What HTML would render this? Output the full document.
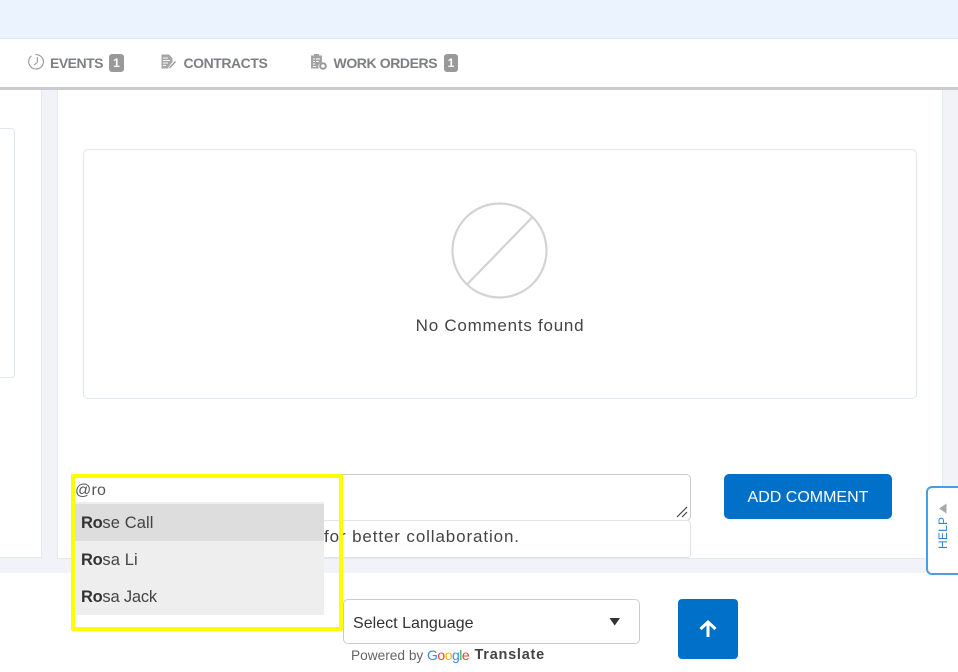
<!DOCTYPE html>
<html><head><meta charset="utf-8">
<style>
*{box-sizing:border-box}
html,body{margin:0;padding:0;width:958px;height:672px;overflow:hidden;background:#fff;font-family:"Liberation Sans",sans-serif}
.a{position:absolute}
.t{position:absolute;white-space:nowrap;line-height:1}
</style></head><body>
<div class="a" style="left:0;top:0;width:958px;height:39px;background:#ebf3fe;border-bottom:1px solid #dfe6ef"></div>
<div class="a" style="left:0;top:39px;width:958px;height:48px;background:#fff"></div>
<div class="a" style="left:0;top:87px;width:958px;height:3px;background:#ccc"></div>

<svg class="a" style="left:26px;top:53px" width="20" height="18" viewBox="0 0 20 18" fill="none" stroke="#999" stroke-width="1.1"><path d="M5.500 2.800A7.400 7.400 0 1 0 17 6"/><path d="M9.500 1.600A7.400 7.400 0 0 1 17.300 7.500"/><path d="M11.300 4v5.400L8 12"/></svg>
<div class="t" style="left:50px;top:55.500px;font-size:14px;font-weight:bold;color:#7d7f84;letter-spacing:-.5px">EVENTS</div>
<div class="a" style="left:109px;top:54px;width:15px;height:18px;background:#999;border-radius:3px;color:#fff;font-size:12px;font-weight:bold;text-align:center;line-height:18px">1</div>

<svg class="a" style="left:160px;top:53px" width="18" height="18" viewBox="0 0 18 18"><path d="M1.500 1.500h7.500l3.500 3.500v4l-4 5v1.500h-7z" fill="#a6a6a6"/><path d="M3 5h5M3 7.500h7M3 10h5M3 12.500h3" stroke="#fff" stroke-width="1"/><path d="M9.500 15l6-6.500" stroke="#999" stroke-width="1.300"/></svg>
<div class="t" style="left:183.500px;top:55.500px;font-size:14px;font-weight:bold;color:#7d7f84;letter-spacing:-.45px">CONTRACTS</div>

<svg class="a" style="left:310px;top:53px" width="18" height="18" viewBox="0 0 18 18"><path d="M1 2.500h3V1h5v1.500h3V9l-3.500 3v3.500H1z" fill="#a3a3a3"/><path d="M3 6h2M6 6h4M3 8.500h2M6 8.500h3M3 11h2M3 13.500h3" stroke="#fff" stroke-width="1"/><circle cx="13" cy="13" r="2.800" fill="#fff" stroke="#999" stroke-width="2"/></svg>
<div class="t" style="left:333.500px;top:55.500px;font-size:14px;font-weight:bold;color:#7d7f84;letter-spacing:-.4px">WORK ORDERS</div>
<div class="a" style="left:444px;top:54px;width:14px;height:18px;background:#999;border-radius:3px;color:#fff;font-size:12px;font-weight:bold;text-align:center;line-height:18px">1</div>

<div class="a" style="left:0;top:90px;width:958px;height:483px;background:#f1f3f8"></div>
<div class="a" style="left:0;top:90px;width:42px;height:468px;background:#fff;border-right:1px solid #e3e8f0;border-bottom:1px solid #e3e8f0"></div>
<div class="a" style="left:-10px;top:128px;width:25px;height:250px;background:#fff;border:1px solid #e2e8f0;border-radius:4px"></div>
<div class="a" style="left:57px;top:90px;width:886px;height:469px;background:#fff;border:1px solid #e3e8f0;border-top:0"></div>
<div class="a" style="left:83px;top:149px;width:834px;height:250px;background:#fff;border:1px solid #e2e8f0;border-radius:5px"></div>
<svg class="a" style="left:450px;top:201px" width="100" height="100" fill="none" stroke="#d3d3d3" stroke-width="2.200"><circle cx="49.500" cy="49.500" r="47"/><path d="M82 16.500L17 83.500"/></svg>
<div class="t" style="left:83px;width:834px;text-align:center;top:317px;font-size:17px;color:#444;letter-spacing:.75px">No Comments found</div>

<div class="a" style="left:73px;top:474px;width:618px;height:47px;background:#fff;border:1px solid #ccc;border-radius:5px"></div>
<svg class="a" style="left:676px;top:506px" width="12" height="12" stroke="#444" stroke-width="1.200"><path d="M1 11L11 1M6 11L11 6"/></svg>
<div class="a" style="left:73px;top:520px;width:618px;height:38px;background:#fff;border:1px solid #e0e4ea;border-radius:4px"></div>
<div class="t" style="left:324px;top:528px;font-size:17px;color:#444;letter-spacing:.88px">for better collaboration.</div>

<div class="a" style="left:724px;top:474px;width:168px;height:45px;background:#0070c9;border-radius:5px;color:#fff;font-size:16px;text-align:center;line-height:47px">ADD COMMENT</div>

<div class="t" style="left:75px;top:483px;font-size:16px;color:#555;letter-spacing:.2px">@ro</div>
<div class="a" style="left:75px;top:502px;width:249px;height:113px;background:#eee"></div>
<div class="a" style="left:75px;top:504px;width:249px;height:37px;background:#ddd"></div>
<div class="t" style="left:81px;top:515px;font-size:16.500px;color:#444;letter-spacing:.1px"><b style="color:#333;letter-spacing:-.3px">Ro</b>se Call</div>
<div class="t" style="left:81px;top:552px;font-size:16.500px;color:#444;letter-spacing:.1px"><b style="color:#333;letter-spacing:-.3px">Ro</b>sa Li</div>
<div class="t" style="left:81px;top:589px;font-size:16.500px;color:#444;letter-spacing:-.2px"><b style="color:#333;letter-spacing:-.3px">Ro</b>sa Jack</div>
<div class="a" style="left:71px;top:474px;width:272px;height:157px;border:4px solid #ff0;border-radius:2px"></div>

<div class="a" style="left:343px;top:599px;width:297px;height:45px;background:#fff;border:1px solid #ccc;border-radius:5px"></div>
<div class="t" style="left:353px;top:616px;font-size:16px;color:#333;letter-spacing:.03px">Select Language</div>
<svg class="a" style="left:609px;top:617px" width="12" height="10"><path d="M0.500 1h10.500L5.700 8.500z" fill="#333"/></svg>
<div class="t" style="left:351px;top:648.500px;font-size:13.700px;color:#666">Powered by</div>
<div class="t" style="left:427px;top:647.500px;font-size:14px;letter-spacing:-.5px"><span style="color:#4285f4">G</span><span style="color:#ea4335">o</span><span style="color:#fbbc05">o</span><span style="color:#4285f4">g</span><span style="color:#34a853">l</span><span style="color:#ea4335">e</span></div>
<div class="t" style="left:474.500px;top:648px;font-size:14.500px;font-weight:bold;color:#444;letter-spacing:.75px">Translate</div>

<div class="a" style="left:678px;top:599px;width:60px;height:60px;background:#0070c9;border-radius:4px"></div>
<svg class="a" style="left:698px;top:619px" width="20" height="20" fill="none" stroke="#fff" stroke-width="3"><path d="M10 18V4M2.500 10L10 3l7.500 7"/></svg>

<div class="a" style="left:926px;top:486px;width:40px;height:89px;background:#fff;border:2px solid #4c9ce2;border-radius:6px"></div>
<svg class="a" style="left:938px;top:503px" width="10" height="12"><path d="M8.500 0.500v10L1 5.500z" fill="#a8a8a8"/></svg>
<div class="t" style="left:937px;top:549px;font-size:12px;color:#2a86dc;letter-spacing:.2px;transform:rotate(-90deg);transform-origin:0 0;height:13px">HELP</div>
</body></html>
